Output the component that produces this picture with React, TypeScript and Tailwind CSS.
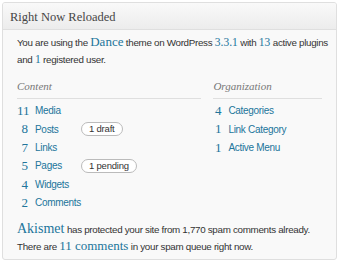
const serif = "font-['Georgia','Liberation_Serif',serif]";
const sans = "font-['Lucida_Grande','Liberation_Sans','Arial',sans-serif]";
const link = `${serif} leading-none tracking-normal text-[#21759b]`;

const content = [
  { n: "11", label: "Media" },
  { n: "8", label: "Posts", badge: "1 draft" },
  { n: "7", label: "Links" },
  { n: "5", label: "Pages", badge: "1 pending" },
  { n: "4", label: "Widgets" },
  { n: "2", label: "Comments" },
];

const org = [
  { n: "4", label: "Categories" },
  { n: "1", label: "Link Category" },
  { n: "1", label: "Active Menu" },
];

function Row({ n, label, badge }: { n: string; label: string; badge?: string }) {
  return (
    <div className="flex h-[18.4px] items-center">
      <span className={`${serif} w-[11px] text-right text-[13px] text-[#21759b]`}>{n}</span>
      <span className="ml-[7px] w-[46px] text-[10px] tracking-[-0.3px] text-[#21759b]">{label}</span>
      {badge && (
        <span className="rounded-full border border-[#bbb] bg-white px-[7px] text-[9.5px] leading-[12px] tracking-[-0.2px] text-[#333]">
          {badge}
        </span>
      )}
    </div>
  );
}

export default function App() {
  return (
    <div className={`${sans} h-[263px] w-[340px] bg-white p-[2px]`}>
      <div className="h-[258px] w-[335px] overflow-hidden rounded-[3px] border border-[#dfdfdf] bg-[#f9f9f9]">
        <div className="h-[27px] border-b border-[#dfdfdf] bg-gradient-to-b from-[#f9f9f9] to-[#ececec] pl-[7px] pt-[5px]">
          <h3 className={`${serif} text-[12.5px] text-[#464646]`}>Right Now Reloaded</h3>
        </div>
        <div className="px-[14px] pt-[4px] text-[#333]">
          <p className="whitespace-nowrap text-[9.8px] leading-[17px] tracking-[-0.3px]">
            You are using the <span className={`${link} text-[13px]`}>Dance</span> theme on WordPress{" "}
            <span className={`${link} text-[11.5px]`}>3.3.1</span> with <span className={`${link} text-[11.5px]`}>13</span>{" "}
            active plugins
            <br />
            and <span className={`${link} text-[11.5px]`}>1</span> registered user.
          </p>
          <div className="mt-[10px] flex">
            <div className="w-[185px]">
              <div className={`${serif} border-b border-[#dfdfdf] pb-[3px] text-[11px] italic text-[#777]`}>Content</div>
              <div className="mt-[3px] flex flex-col">
                {content.map((r) => (
                  <Row key={r.label} {...r} />
                ))}
              </div>
            </div>
            <div className="ml-[12px] w-[109px]">
              <div className={`${serif} border-b border-[#dfdfdf] pb-[3px] text-[11px] italic text-[#777]`}>Organization</div>
              <div className="mt-[3px] flex flex-col">
                {org.map((r) => (
                  <div key={r.label} className="flex h-[18.4px] items-center">
                    <span className={`${serif} w-[8px] text-right text-[13px] text-[#21759b]`}>{r.n}</span>
                    <span className="ml-[7px] text-[10px] tracking-[-0.3px] text-[#21759b]">{r.label}</span>
                  </div>
                ))}
              </div>
            </div>
          </div>
          <p className="mt-[9px] whitespace-nowrap text-[9.8px] leading-[17px] tracking-[-0.3px]">
            <span className={`${link} text-[14px]`}>Akismet</span> has protected your site from 1,770 spam comments
            already.
            <br />
            There are <span className={`${link} text-[13px]`}>11 comments</span> in your spam queue right now.
          </p>
        </div>
      </div>
    </div>
  );
}
